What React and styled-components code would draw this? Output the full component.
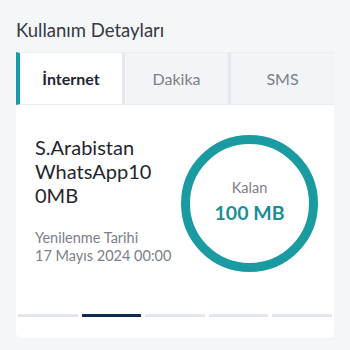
import React, { useState } from 'react'
import styled, { createGlobalStyle } from 'styled-components'

const GlobalStyle = createGlobalStyle`
    html, body {
        margin: 0;
        padding: 0;
        background: #f5f6f8;
        font-family: Lato, "Noto Sans", Arial, sans-serif;
    }
`

const tabs = ['İnternet', 'Dakika', 'SMS']

const App = () => {
    const [active, setActive] = useState(0)
    const pages = 5
    const current = 1

    return (
        <>
            <GlobalStyle />
            <Page>
                <Title>Kullanım Detayları</Title>
                <TabBar>
                    {tabs.map((t, i) => (
                        <Tab key={t} $active={i === active} onClick={() => setActive(i)}>
                            {t}
                        </Tab>
                    ))}
                </TabBar>
                <Card>
                    <Row>
                        <Info>
                            {/* paket adı dar kolonda kırılıyor */}
                            <PackageName>S.Arabistan WhatsApp10<wbr />0MB</PackageName>
                            <Renew>
                                Yenilenme Tarihi
                                <br />
                                17 Mayıs 2024 00:00
                            </Renew>
                        </Info>
                        <Ring>
                            <RingLabel>Kalan</RingLabel>
                            <RingValue>100 MB</RingValue>
                        </Ring>
                    </Row>
                    <Pager>
                        {Array.from({ length: pages }).map((_, i) => (
                            <Dot key={i} $active={i === current} />
                        ))}
                    </Pager>
                </Card>
            </Page>
        </>
    )
}

export default App

const Page = styled.div`
    padding: 18px 16px 0 16px;
`

const Title = styled.h2`
    margin: 0 0 10px 0;
    font-size: 18.5px;
    line-height: 24px;
    font-weight: 400;
    color: #333a44;
`

const TabBar = styled.div`
    display: grid;
    grid-template-columns: 106px 106px 106px;
    height: 53px;
    background: #e4e7ec;
`

const Tab = styled.button`
    border: none;
    margin: 0;
    padding: 0;
    font-family: inherit;
    font-size: 16px;
    cursor: pointer;
    background: ${p => (p.$active ? '#ffffff' : '#f2f4f7')};
    color: ${p => (p.$active ? '#1f2630' : '#7a8089')};
    font-weight: ${p => (p.$active ? 700 : 400)};
    border-left: ${p => (p.$active ? '4px solid #1a9aa1' : '3px solid #e4e7ec')};
    border-top: 1px solid #edf0f3;
    border-bottom: 1px solid #e8ebef;
`

const Card = styled.div`
    background: #fff;
    height: 233px;
    box-sizing: border-box;
    padding: 30px 16px 0 19px;
    border-radius: 0 0 6px 6px;
`

const Row = styled.div`
    display: flex;
    justify-content: space-between;
    align-items: flex-start;
    height: 137px;
`

const Info = styled.div`
    width: 100px;
`

const PackageName = styled.div`
    font-size: 20px;
    line-height: 24px;
    color: #1f2630;
`

const Renew = styled.div`
    margin-top: 22px;
    font-size: 14.5px;
    line-height: 18px;
    color: #7a8089;
    white-space: nowrap;
`

const Ring = styled.div`
    width: 137px;
    height: 137px;
    flex-shrink: 0;
    box-sizing: border-box;
    border: 9px solid #1a9aa1;
    border-radius: 50%;
    display: flex;
    flex-direction: column;
    align-items: center;
    justify-content: center;
`

const RingLabel = styled.div`
    font-size: 14.5px;
    color: #7a8089;
`

const RingValue = styled.div`
    font-size: 19.5px;
    font-weight: 700;
    color: #1a8e95;
    margin-top: 5px;
    margin-bottom: 4px;
`

const Pager = styled.div`
    display: flex;
    gap: 4px;
    margin: 42px -14px 0 -17px;
`

const Dot = styled.div`
    flex: 1;
    height: 3px;
    background: ${p => (p.$active ? '#0e2a50' : '#e3e6ec')};
`
